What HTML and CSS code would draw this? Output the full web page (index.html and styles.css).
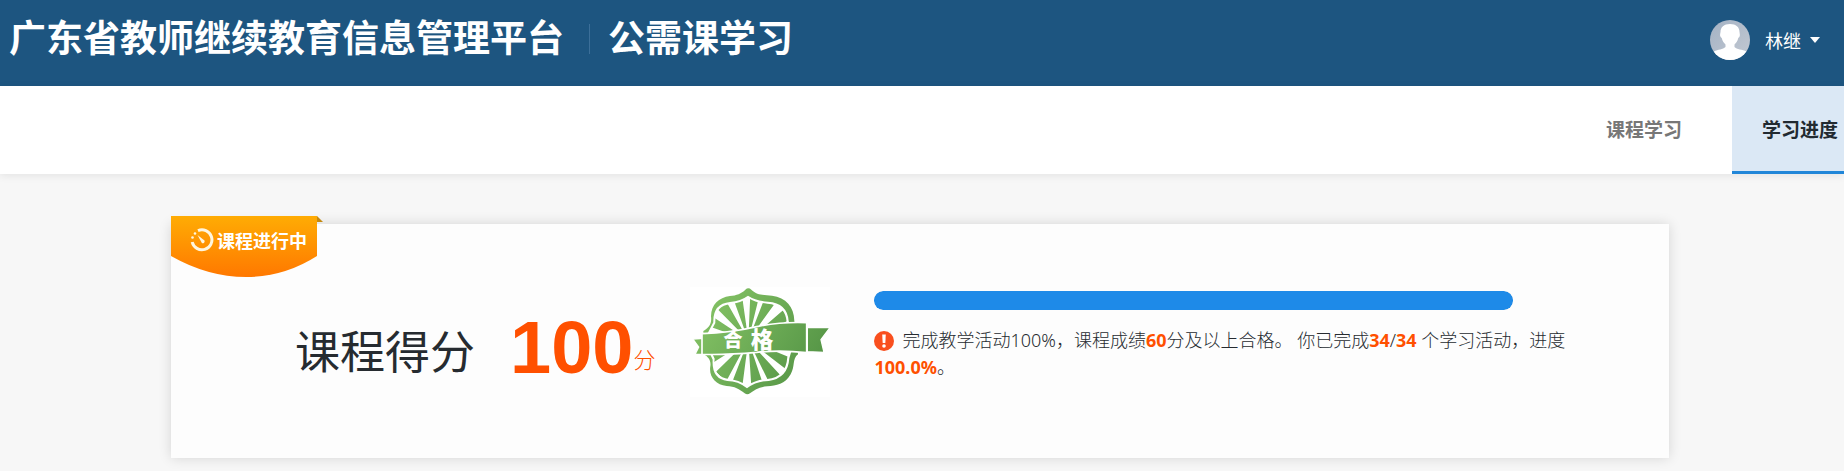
FILE: index.html
```html
<!DOCTYPE html>
<html lang="zh-CN">
<head>
<meta charset="utf-8">
<title>公需课学习</title>
<link rel="stylesheet" href="styles.css">
</head>
<body>
<header class="header">
  <h1 class="brand"><span>广东省教师继续教育信息管理平台</span><span class="brand-sub">公需课学习</span></h1>
  <button class="user" type="button">
    <svg class="avatar" viewBox="0 0 40 40" aria-hidden="true">
      <defs>
        <clipPath id="avatar-clip"><circle cx="20" cy="20" r="20"/></clipPath>
        <linearGradient id="avatar-bg" x1="0" y1="0" x2="1" y2="1"><stop offset="0" stop-color="#a4b2c4"/><stop offset="1" stop-color="#c3c9d2"/></linearGradient>
      </defs>
      <g clip-path="url(#avatar-clip)">
        <rect width="40" height="40" fill="url(#avatar-bg)"/>
        <path fill="#fff" d="M20 4c6 0 9.500 3 9.500 8 0 1 .5 2 .3 3.500-.2 1.600-1 2-1.500 2.500-.8 3.500-2.300 5-3.800 6.500v2.500c2 2.500 8 2.500 12 4.500l5 9H-1l5-9c4-2 9-2 11.500-4.500v-2.500c-1.500-1.500-3-3-3.800-6.500-.8-.5-1.400-1.200-1.600-2.500-.2-1.500.4-2.500.4-3.500C10.500 7 14 4 20 4z"/>
      </g>
    </svg>
    <span>林继</span>
    <span class="caret"></span>
  </button>
</header>
<nav class="nav">
  <a class="tab" href="#course">课程学习</a>
  <a class="tab tab-active" href="#progress" aria-current="page">学习进度</a>
</nav>
<main class="main">
  <section class="card">
    <div class="ribbon">
      <svg class="ribbon-bg" viewBox="0 0 153 62" aria-hidden="true">
        <defs><linearGradient id="ribbon-fill" x1="0" y1="0" x2="0" y2="1"><stop offset="0" stop-color="#ffac04"/><stop offset="1" stop-color="#ff7800"/></linearGradient></defs>
        <path fill="#c48a12" d="M146 0l6 6h-6z"/>
        <path fill="url(#ribbon-fill)" d="M0 0h146v40Q113 61 75 61T0 40z"/>
      </svg>
      <div class="ribbon-label">
        <svg class="gauge" viewBox="0 0 24 24" aria-hidden="true">
          <path d="M8 2.600A10 10 0 1 1 2.200 14" fill="none" stroke="#fff6df" stroke-width="3"/>
          <path d="M7.500 7l7 5.500a2 2 0 0 1-2.600 2.600z" fill="#fff6df"/>
          <circle cx="5" cy="5.500" r="1.300" fill="#fff6df"/><circle cx="2.500" cy="9.500" r="1.300" fill="#fff6df"/>
        </svg>
        <span>课程进行中</span>
      </div>
    </div>
    <div class="score">
      <h2 class="score-title">课程得分</h2>
      <p class="score-value">100</p>
      <span class="score-unit">分</span>
    </div>
    <svg class="seal" viewBox="30 20 420 330" role="img" aria-label="合格">
      <defs>
        <linearGradient id="seal-fill" gradientUnits="userSpaceOnUse" x1="60" y1="60" x2="400" y2="280"><stop offset="0" stop-color="#86c466"/><stop offset="1" stop-color="#559546"/></linearGradient>
        <clipPath id="seal-inner"><path d="M204 52Q228 68 262 70Q316 74 320 125L338 180L322 230Q318 290 262 296Q228 298 201 316Q176 298 146 296Q98 290 104 235L78 180L106 128Q104 76 152 71Q182 68 204 52Z"/></clipPath>
      </defs>
      <rect x="30" y="20" width="420" height="330" fill="#fff"/>
      <path fill="url(#seal-fill)" d="M196 28Q205 20 214 28C232 46 254 43 276 46C318 52 342 78 343 122L352 180L354 222C336 236 346 258 332 282C316 312 288 316 262 318C238 320 224 328 210 339Q202 345 194 339C178 326 164 318 140 317C106 314 86 288 91 258C94 240 84 230 72 222L70 152C86 142 96 132 93 108C94 72 116 52 150 47C170 45 184 40 196 28Z"/>
      <path fill="#fff" d="M204 46Q228 62 264 64Q322 68 326 122L344 180L328 234Q324 294 266 302Q230 302 201 324Q174 302 142 302Q94 296 98 238L72 180L100 126Q98 70 150 65Q182 62 204 46Z"/>
      <g clip-path="url(#seal-inner)" fill="url(#seal-fill)">
        <path d="M205 180L211 40L238 46ZM205 180L256 48L290 62ZM205 180L316 84L334 116ZM205 180L186 46L158 50ZM205 180L138 62L110 84ZM205 180L96 108L82 136ZM205 180L215 335L252 320ZM205 180L270 312L306 290ZM205 180L322 270L340 236ZM205 180L186 325L154 312ZM205 180L138 304L108 274ZM205 180L94 250L80 220Z"/>
      </g>
      <path fill="url(#seal-fill)" stroke="#fff" stroke-width="4" d="M38 176L72 174V222L45 222L56 200ZM382 142L450 142L423 178L432 216L382 214Z"/>
      <path fill="url(#seal-fill)" stroke="#fff" stroke-width="5" d="M66 160Q150 158 230 139Q300 124 380 127V217Q300 208 230 216Q140 224 66 222Z"/>
      <text class="seal-text" x="130" y="201">合</text>
      <text class="seal-text seal-text-large" x="212" y="202">格</text>
    </svg>
    <div class="detail">
      <div class="bar" role="progressbar" aria-label="学习进度" aria-valuemin="0" aria-valuemax="100" aria-valuenow="100"><div class="bar-fill" style="width:100%"></div></div>
      <p class="summary"><svg class="alert" viewBox="0 0 20 20" aria-hidden="true"><circle cx="10" cy="10" r="10" fill="#f94f1e"/><path fill="#fff" d="M8.200 3.500h3.600L11.300 12H8.700z"/><circle cx="10" cy="15" r="1.800" fill="#fff"/></svg>完成教学活动100%，课程成绩<b>60</b>分及以上合格。 你已完成<b>34</b>/<b>34</b> 个学习活动，进度<b>100.0%</b>。</p>
    </div>
  </section>
</main>
</body>
</html>
```

FILE: styles.css
```css
* { box-sizing: border-box; }
body {
  margin: 0;
  background: #f7f7f7;
  color: #262b30;
  font-family: "Noto Sans", "Noto Sans CJK SC", sans-serif;
}
h1, h2, p { margin: 0; }
.header {
  display: flex;
  justify-content: space-between;
  align-items: flex-start;
  height: 86px;
  padding: 16px 24px 0 9px;
  background: #1d5580;
  color: #fff;
}
.brand {
  display: flex;
  align-items: center;
  font: 700 37px/40px "Noto Sans CJK SC", sans-serif;
}
.brand-sub {
  margin-left: 25px;
  position: relative;
  padding-left: 19px;
}
.brand-sub::before {
  content: "";
  position: absolute;
  left: 0;
  top: 8px;
  height: 30px;
  border-left: 1px solid #3c6f99;
}
.user {
  display: flex;
  align-items: center;
  margin-top: 4px;
  border: 0;
  padding: 0;
  background: none;
  color: #fff;
  font: 400 18px/24px "Noto Sans CJK SC", sans-serif;
}
.avatar { width: 40px; height: 40px; margin-right: 15px; }
.caret {
  margin-left: 9px;
  border: 5px solid transparent;
  border-top: 6px solid #fff;
  border-bottom: 0;
}
.nav {
  display: flex;
  justify-content: flex-end;
  height: 88px;
  background: #fff;
  box-shadow: 0 2px 8px rgba(0, 0, 0, .08);
}
.tab {
  display: flex;
  align-items: center;
  padding: 0 50px 3px;
  color: #777;
  font: 700 19px/28px "Noto Sans CJK SC", sans-serif;
  text-decoration: none;
}
.tab-active {
  padding: 0 6px 0 30px;
  background: #dbe8f5;
  color: #222a30;
  border-bottom: 3px solid #2186d8;
}
.main { padding: 50px 175px 13px 171px; }
.card {
  position: relative;
  display: flex;
  align-items: flex-start;
  padding: 63px 101px 61px 124px;
  background: #fdfdfd;
  box-shadow: 0 0 12px rgba(0, 0, 0, .14);
}
.ribbon { position: absolute; left: 0; top: -8px; }
.ribbon-bg { display: block; width: 153px; height: 62px; }
.ribbon-label {
  position: absolute;
  left: 19px;
  top: 12px;
  display: flex;
  align-items: center;
  gap: 3px;
  color: #fff;
  font: 700 18px/24px "Noto Sans CJK SC", sans-serif;
  white-space: nowrap;
}
.gauge { width: 24px; height: 24px; }
.score {
  display: flex;
  align-items: flex-end;
  padding-top: 23px;
  white-space: nowrap;
}
.score-title {
  width: 215px;
  font: 400 45px/72px "Noto Sans CJK SC", sans-serif;
}
.score-value {
  color: #ff5000;
  font: 700 74px/76px "Liberation Sans", sans-serif;
}
.score-unit {
  color: #ff5000;
  font: 300 22px/56px "Noto Sans CJK SC", sans-serif;
}
.seal { flex: none; width: 140px; height: 110px; margin: 0 44px 0 35px; }
.seal-text { fill: #fff; font: 900 58px "Noto Sans CJK SC", sans-serif; }
.seal-text-large { font-size: 68px; }
.detail { flex: 1; padding-top: 4px; }
.bar { width: 92%; height: 19px; border-radius: 9px; background: #e6e6e6; overflow: hidden; }
.bar-fill { height: 100%; border-radius: 9px; background: #1e8ae8; }
.summary {
  margin-top: 17px;
  font-size: 18px;
  line-height: 27px;
  font-weight: 300;
}
.summary b { color: #ff5000; font-weight: 700; }
.alert { width: 20px; height: 20px; margin-right: 8px; vertical-align: -4px; }
```
